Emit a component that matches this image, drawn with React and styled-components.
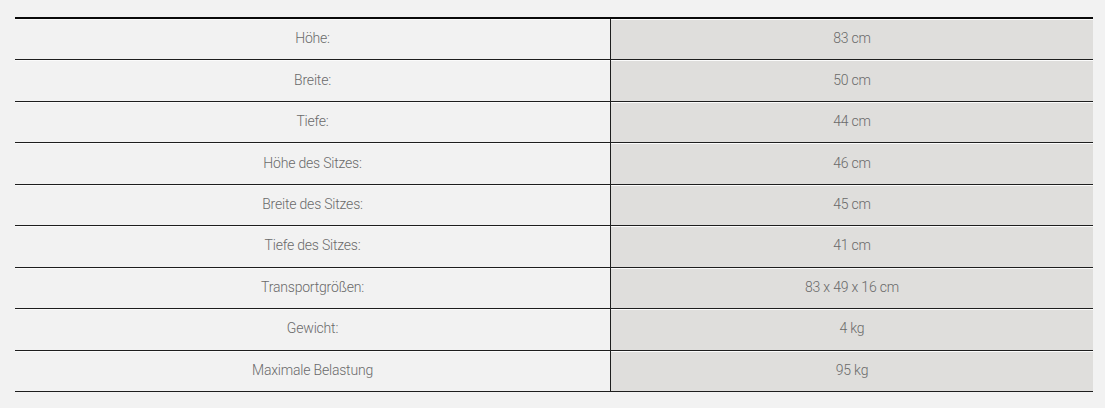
import React from 'react';
import styled, { createGlobalStyle } from 'styled-components';

const GlobalStyle = createGlobalStyle`
  html, body {
    margin: 0;
    padding: 0;
    background: #f2f2f2;
  }
`;

const Page = styled.div`
  padding: 17px 12px 0 15px;
  font-family: Roboto, "Liberation Sans", sans-serif;
  font-weight: 300;
`;

const Table = styled.div`
  display: grid;
  grid-template-columns: 595px 1fr;
  width: 1078px;
  border-top: 2px solid #0a0a0a;
`;

const Cell = styled.div`
  box-sizing: border-box;
  height: 41.45px;
  padding-bottom: 2px;
  display: flex;
  align-items: center;
  justify-content: center;
  font-size: 14px;
  color: #6a6a6a;
  letter-spacing: -0.2px;
  border-bottom: 1px solid #1e1e1e;
  box-shadow: inset 0 1px 0 #fbfbfb;
  background: ${p => (p.$value ? '#dfdedc' : '#f2f2f2')};
  border-left: ${p => (p.$value ? '1px solid #1e1e1e' : 'none')};
`;

const specs = [
  ['Höhe:', '83 cm'],
  ['Breite:', '50 cm'],
  ['Tiefe:', '44 cm'],
  ['Höhe des Sitzes:', '46 cm'],
  ['Breite des Sitzes:', '45 cm'],
  ['Tiefe des Sitzes:', '41 cm'],
  ['Transportgrößen:', '83 x 49 x 16 cm'],
  ['Gewicht:', '4 kg'],
  ['Maximale Belastung', '95 kg'],
];

export default function App() {
  return (
    <Page>
      <GlobalStyle />
      <Table>
        {specs.map(([label, value]) => (
          <React.Fragment key={label}>
            <Cell>{label}</Cell>
            <Cell $value>{value}</Cell>
          </React.Fragment>
        ))}
      </Table>
    </Page>
  );
}
